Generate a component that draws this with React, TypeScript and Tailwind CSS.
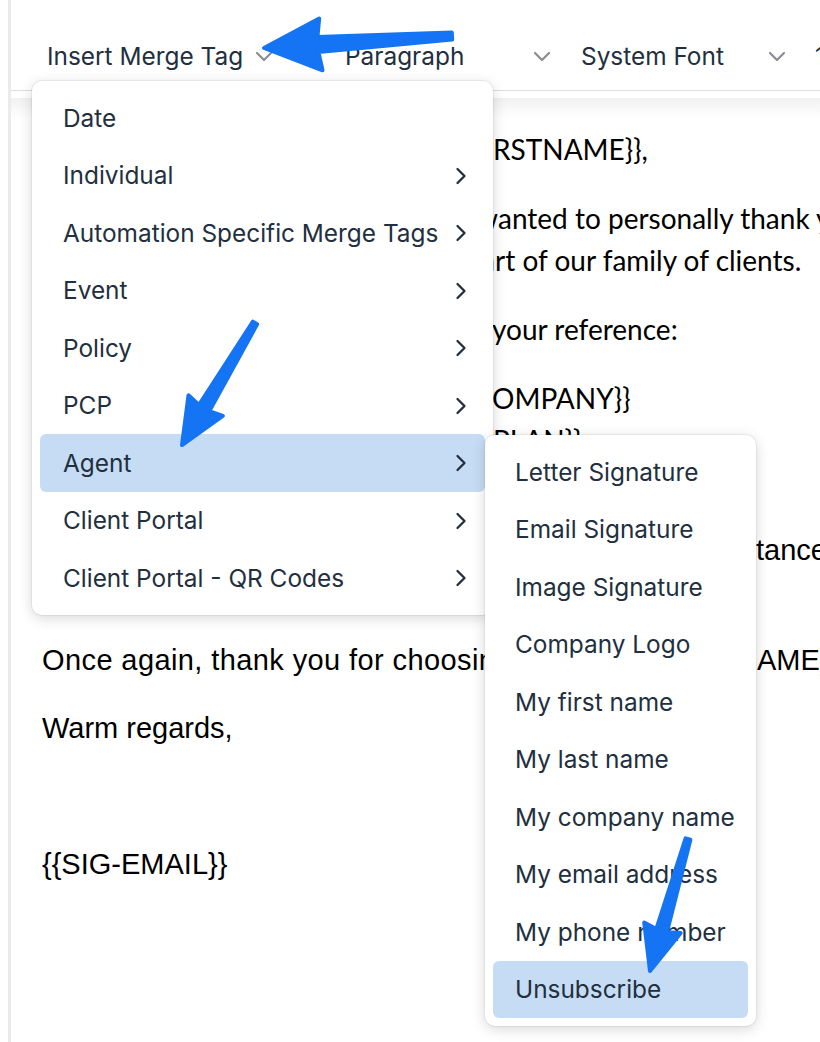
import React from "react";

type Pt = [number, number];

// Tapered annotation arrow: tip, swept head and a shaft narrowing toward the tail.
function arrowPoints(
  tail: Pt,
  tip: Pt,
  headLen: number,
  headHalf: number,
  shaftHead: number,
  shaftTail: number
): string {
  const dx = tail[0] - tip[0];
  const dy = tail[1] - tip[1];
  const len = Math.hypot(dx, dy);
  const ux = dx / len;
  const uy = dy / len;
  const nx = -uy;
  const ny = ux;
  const bx = tip[0] + ux * headLen;
  const by = tip[1] + uy * headLen;
  const pts: Pt[] = [
    tip,
    [bx + ux * 3 + nx * headHalf, by + uy * 3 + ny * headHalf],
    [bx + nx * shaftHead, by + ny * shaftHead],
    [tail[0] + nx * shaftTail, tail[1] + ny * shaftTail],
    [tail[0] - nx * shaftTail, tail[1] - ny * shaftTail],
    [bx - nx * shaftHead, by - ny * shaftHead],
    [bx + ux * 3 - nx * headHalf, by + uy * 3 - ny * headHalf],
  ];
  return pts.map((p) => `${p[0].toFixed(1)},${p[1].toFixed(1)}`).join(" ");
}

const ARROWS = [
  arrowPoints([452, 36], [264, 48], 54, 26, 7.5, 3.5),
  arrowPoints([255, 323], [182, 445], 43, 20, 6, 2.5),
  arrowPoints([688, 839], [650, 971], 42, 19, 5.5, 2.5),
];

function DownChevron() {
  return (
    <svg width="18" height="11" viewBox="0 0 18 11" fill="none" className="shrink-0">
      <path d="M2 2 L9 9 L16 2" stroke="#8a8d92" strokeWidth="2.2" strokeLinecap="round" strokeLinejoin="round" />
    </svg>
  );
}

function RightChevron() {
  return (
    <svg width="12" height="18" viewBox="0 0 12 18" fill="none" className="shrink-0">
      <path d="M2.5 2 L9.5 9 L2.5 16" stroke="#222f3e" strokeWidth="2.3" strokeLinecap="round" strokeLinejoin="round" />
    </svg>
  );
}

const MAIN_ITEMS: { label: string; sub: boolean; active?: boolean }[] = [
  { label: "Date", sub: false },
  { label: "Individual", sub: true },
  { label: "Automation Specific Merge Tags", sub: true },
  { label: "Event", sub: true },
  { label: "Policy", sub: true },
  { label: "PCP", sub: true },
  { label: "Agent", sub: true, active: true },
  { label: "Client Portal", sub: true },
  { label: "Client Portal - QR Codes", sub: true },
];

const AGENT_ITEMS: { label: string; active?: boolean }[] = [
  { label: "Letter Signature" },
  { label: "Email Signature" },
  { label: "Image Signature" },
  { label: "Company Logo" },
  { label: "My first name" },
  { label: "My last name" },
  { label: "My company name" },
  { label: "My email address" },
  { label: "My phone number" },
  { label: "Unsubscribe", active: true },
];

export default function App() {
  return (
    <div className="relative w-[820px] h-[1042px] overflow-hidden bg-white font-['Inter',sans-serif]">
      <div className="flex h-full">
        <div className="w-[8px] shrink-0" />
        <div className="w-[3px] shrink-0 bg-[#ebebeb]" />
        <div className="flex flex-col flex-1 min-w-0">
          {/* toolbar */}
          <div className="flex items-end h-[91px] pl-[27px] pb-[15px] border-b border-[#dedede] text-[24.4px] text-[#222f3e] whitespace-nowrap overflow-hidden">
            <div className="flex items-center gap-[12px] w-[242px] shrink-0 pl-[9px]">
              <span>Insert Merge Tag</span>
              <DownChevron />
            </div>
            <div className="flex items-center justify-between w-[225px] shrink-0 ml-[56px] pl-[9px] pr-[10px]">
              <span>Paragraph</span>
              <DownChevron />
            </div>
            <div className="flex items-center justify-between w-[224px] shrink-0 ml-[11px] pl-[9px] pr-[10px]">
              <span>System Font</span>
              <DownChevron />
            </div>
            <div className="shrink-0 ml-[10px] pl-[9px]">
              <span>12pt</span>
            </div>
          </div>
          <div className="h-[7px] shrink-0" />
          {/* document body */}
          <div className="flex-1 pl-[31px] pt-[30px] bg-[linear-gradient(to_bottom,#f1f1f1,#ffffff_20px)] text-black whitespace-nowrap">
            <div className="font-['Lato',sans-serif] text-[28px]">
              <div className="mb-[27px] leading-[42px]">
                <span className="inline-flex w-[451px] justify-end overflow-hidden">
                  <span>{"Dear {{INDIVIDUAL.FI"}</span>
                </span>
                <span>{"RSTNAME}},"}</span>
              </div>
              <div className="mb-[27px] leading-[42px]">
                <div>
                  <span className="inline-flex w-[456px] justify-end overflow-hidden">
                    <span>Thank you for choosing us. I w</span>
                  </span>
                  <span>anted to personally thank you for trusting us and becoming a</span>
                </div>
                <div>
                  <span className="inline-flex w-[453px] justify-end overflow-hidden">
                    <span>valued pa</span>
                  </span>
                  <span>rt of our family of clients.</span>
                </div>
              </div>
              <div className="mb-[27px] leading-[42px]">
                <span className="inline-flex w-[450px] justify-end overflow-hidden">
                  <span>Here are your policy details for </span>
                </span>
                <span>your reference:</span>
              </div>
              <div className="mb-[26px] leading-[42px]">
                <div>
                  <span className="inline-flex w-[450px] justify-end overflow-hidden">
                    <span>{"Insurance Company: {{POLICY.C"}</span>
                  </span>
                  <span>{"OMPANY}}"}</span>
                </div>
                <div>
                  <span className="inline-flex w-[451px] justify-end overflow-hidden">
                    <span>{"Plan Name: {{POLICY."}</span>
                  </span>
                  <span>{"PLAN}}"}</span>
                </div>
              </div>
            </div>
            <div className="font-['Liberation_Sans',Arial,sans-serif] text-[29px]">
              <div className="mb-[26px] leading-[42px]">
                <div>If you have any questions about your</div>
                <div>
                  <span className="inline-flex w-[714px] justify-end overflow-hidden">
                    <span>policy, please reach out to us for assis</span>
                  </span>
                  <span>tance anytime.</span>
                </div>
                <div>We are always happy to help.</div>
              </div>
              <div className="mb-[26px] leading-[42px]">
                <span className="inline-block w-[715px] overflow-hidden align-bottom tracking-[0.4px]">
                  {"Once again, thank you for choosing {{AGENCY.N"}
                </span>
                <span>{"AME}}."}</span>
              </div>
              <div className="mb-[26px] leading-[42px]">Warm regards,</div>
              <div className="mb-[26px] leading-[42px]">&nbsp;</div>
              <div className="mb-[26px] leading-[42px]">{"{{SIG-EMAIL}}"}</div>
            </div>
          </div>
        </div>
      </div>

      {/* merge tag menu */}
      <div className="absolute left-[32px] top-[81px] w-[461px] p-[8px] rounded-[10px] bg-white shadow-[0_0_0_1px_rgba(0,0,0,0.05),0_3px_14px_rgba(0,0,0,0.16)] text-[24.4px] text-[#222f3e]">
        {MAIN_ITEMS.map((it) => (
          <div
            key={it.label}
            className={
              "flex items-center justify-between h-[57.5px] pl-[23px] pr-[18px] pt-[1px] rounded-[6px] whitespace-nowrap " +
              (it.active ? "bg-[#c6dcf5]" : "")
            }
          >
            <span>{it.label}</span>
            {it.sub && <RightChevron />}
          </div>
        ))}
      </div>

      {/* agent submenu */}
      <div className="absolute left-[485px] top-[435px] w-[271px] p-[8px] rounded-[10px] bg-white shadow-[0_0_0_1px_rgba(0,0,0,0.05),0_3px_14px_rgba(0,0,0,0.16)] text-[24.4px] text-[#222f3e]">
        {AGENT_ITEMS.map((it) => (
          <div
            key={it.label}
            className={
              "flex items-center h-[57.5px] pl-[22px] pt-[1px] rounded-[6px] whitespace-nowrap " +
              (it.active ? "bg-[#c6dcf5]" : "")
            }
          >
            {it.label}
          </div>
        ))}
      </div>

      {/* annotation arrows */}
      <svg className="absolute inset-0 pointer-events-none" width="820" height="1042" viewBox="0 0 820 1042">
        {ARROWS.map((p, i) => (
          <polygon key={i} points={p} fill="#1474f4" stroke="#1474f4" strokeWidth="4" strokeLinejoin="round" />
        ))}
      </svg>
    </div>
  );
}
